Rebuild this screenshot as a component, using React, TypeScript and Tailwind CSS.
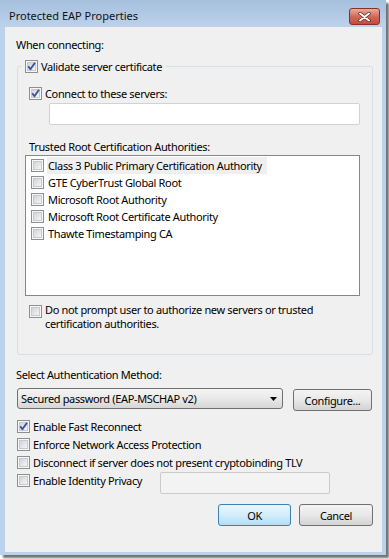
import React from 'react';

const Check = ({ checked = false }: { checked?: boolean }) => (
  <span className="relative flex h-[13px] w-[13px] shrink-0 items-center justify-center border border-[#8e8f8f] bg-[#f7f7f7]">
    <span className="h-[9px] w-[9px] border border-[#c6c9ce] bg-gradient-to-br from-[#d0d3d8] to-[#f6f6f7]" />
    {checked && (
      <svg className="absolute left-0 top-0" width="11" height="11" viewBox="0 0 11 11">
        <path d="M2.2 5.2 L4.4 8.2 L9 1.8" fill="none" stroke="#3c52a0" strokeWidth="1.9" strokeLinejoin="round" />
      </svg>
    )}
  </span>
);

const Row = ({ checked, children, className = '' }: { checked?: boolean; children: React.ReactNode; className?: string }) => (
  <div className={`flex h-[15px] items-center gap-[3px] whitespace-nowrap ${className}`}>
    <Check checked={checked} />
    <span>{children}</span>
  </div>
);

const Button = ({ children, primary = false, className = '' }: { children: React.ReactNode; primary?: boolean; className?: string }) => (
  <button
    className={`flex h-[22px] items-center justify-center rounded-[3px] border ${
      primary
        ? 'border-[#3c7fb1] bg-gradient-to-b from-[#eaf6fd] via-[#d3edfb] to-[#b2def7]'
        : 'border-[#707070] bg-gradient-to-b from-[#f4f4f4] via-[#e8e8e8] to-[#d3d3d3]'
    } ${className}`}
  >
    {children}
  </button>
);

const certs = [
  'Class 3 Public Primary Certification Authority',
  'GTE CyberTrust Global Root',
  'Microsoft Root Authority',
  'Microsoft Root Certificate Authority',
  'Thawte Timestamping CA',
];

export default function App() {
  return (
    <div className="h-[559px] w-[389px] bg-white font-['Noto_Sans',sans-serif] text-[11px] tracking-[-0.35px] text-black">
      <div className="flex h-[555px] w-[386px] flex-col bg-[#bcd2ea] shadow-[3px_3px_2px_rgba(0,0,0,0.55)]">
        {/* title bar */}
        <div className="flex h-[27px] items-start justify-between bg-gradient-to-b from-[#a5bfdd] to-[#bdd2ea]">
          <div className="pl-[9px] pt-[8px] text-[11px] leading-[15px] tracking-normal text-[#111]">Protected EAP Properties</div>
          <div className="mr-[6px] mt-[8px] flex h-[17px] w-[31px] items-center justify-center rounded-[3px] border border-[#8a2f26] bg-gradient-to-b from-[#e9ab9c] via-[#d06a59] to-[#c44a3b]">
            <svg width="13" height="10" viewBox="0 0 13 10">
              <path d="M2 1.5 L11 8.5 M11 1.5 L2 8.5" stroke="#5a2a24" strokeWidth="3.4" strokeLinecap="round" />
              <path d="M2 1.5 L11 8.5 M11 1.5 L2 8.5" stroke="#ffffff" strokeWidth="2" strokeLinecap="round" />
            </svg>
          </div>
        </div>

        {/* client area */}
        <div className="ml-[5px] flex h-[525px] w-[377px] flex-col bg-[#f0f0f0] pl-[11px] pr-[9px] leading-[15px]">
          <div className="mt-[10px]">When connecting:</div>

          <fieldset className="ml-[1px] mt-[7px] w-[356px] rounded-[3px] border border-[#d5dfe5] p-0">
            <legend className="ml-[4px] pl-[3px] pr-[4px]">
              <Row checked>Validate server certificate</Row>
            </legend>
            <div className="flex flex-col pb-[23px] pl-[7px]">
              <Row checked className="ml-[4px] mt-[12px]">Connect to these servers:</Row>
              <div className="ml-[24px] mt-[2px] h-[22px] w-[311px] rounded-[2px] border border-[#cfd3d8] bg-white" />
              <div className="ml-[4px] mt-[14px]">Trusted Root Certification Authorities:</div>
              <div className="mt-[1px] h-[141px] w-[335px] border border-[#828790] bg-white pl-[5px] pt-[1px]">
                {certs.map((c, i) => (
                  <div key={c} className="flex h-[17px] items-center gap-[3px] whitespace-nowrap">
                    <Check />
                    <span className={`flex h-[17px] items-center pl-[1px] ${i === 0 ? 'w-[220px] bg-[#efefef]' : ''}`}>{c}</span>
                  </div>
                ))}
              </div>
              <div className="ml-[4px] mt-[7px] flex items-start gap-[3px] leading-[14px]">
                <span className="mt-[2px]">
                  <Check />
                </span>
                <span>
                  Do not prompt user to authorize new servers or trusted
                  <br />
                  certification authorities.
                </span>
              </div>
            </div>
          </fieldset>

          <div className="mt-[12px]">Select Authentication Method:</div>

          <div className="mt-[6px] flex items-start">
            <div className="ml-[1px] flex h-[21px] w-[266px] items-center justify-between rounded-[3px] border border-[#707070] bg-gradient-to-b from-[#f4f4f4] via-[#e9e9e9] to-[#d6d6d6] pl-[3px] pr-[5px]">
              <span>Secured password (EAP-MSCHAP v2)</span>
              <svg width="7" height="4" viewBox="0 0 7 4">
                <path d="M0 0 H7 L3.5 4 Z" fill="#000" />
              </svg>
            </div>
            <Button className="ml-[10px] mt-[1px] h-[21px] w-[79px]">Configure...</Button>
          </div>

          <div className="mt-[8px] flex flex-col gap-[3px]">
            <Row checked className="ml-[1px]">Enable Fast Reconnect</Row>
            <Row className="ml-[1px]">Enforce Network Access Protection</Row>
            <Row className="ml-[1px]">Disconnect if server does not present cryptobinding TLV</Row>
            <div className="flex items-start">
              <Row className="ml-[1px] w-[143px]">Enable Identity Privacy</Row>
              <div className="-mt-[1px] h-[22px] w-[170px] rounded-[2px] border border-[#cbcbcb] bg-[#f3f3f3]" />
            </div>
          </div>

          <div className="mt-[10px] flex justify-end gap-[8px]">
            <Button primary className="w-[73px]">OK</Button>
            <Button className="w-[74px]">Cancel</Button>
          </div>
        </div>
      </div>
    </div>
  );
}
